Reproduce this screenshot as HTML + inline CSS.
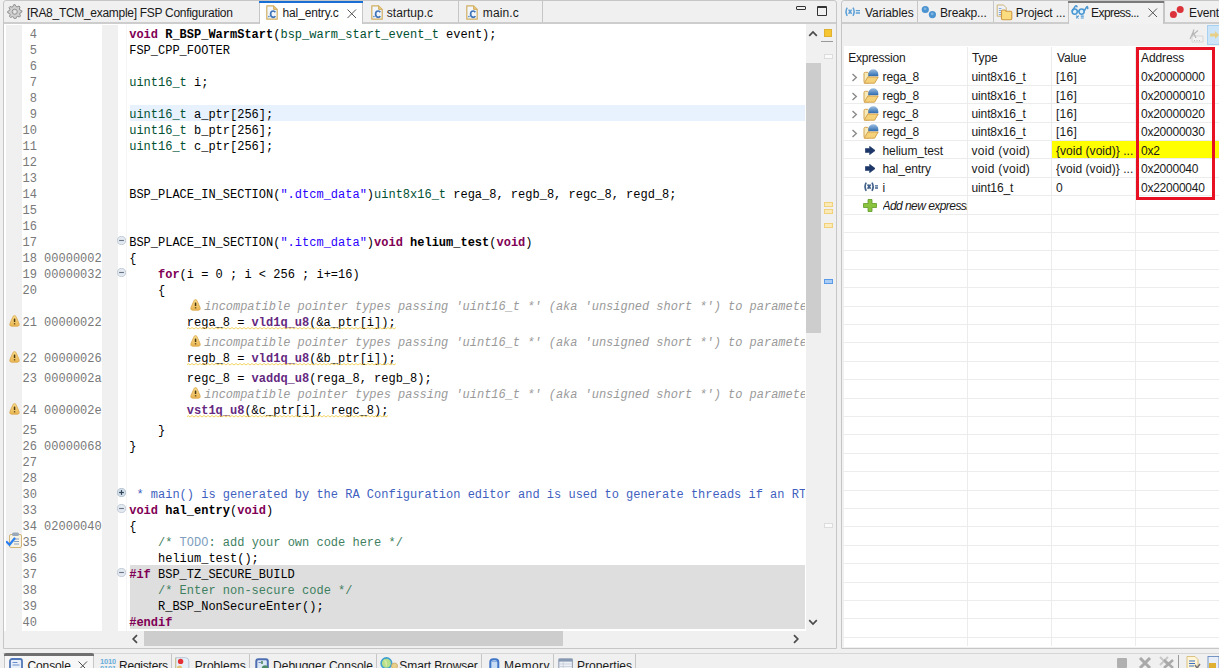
<!DOCTYPE html>
<html><head><meta charset="utf-8"><style>
*{box-sizing:border-box}
body{margin:0;width:1219px;height:668px;overflow:hidden;background:#f0f0f0;position:relative;font-family:'Liberation Sans', sans-serif;font-size:12px;letter-spacing:-0.3px;color:#000}
.a{position:absolute}
.code{position:absolute;left:0;white-space:pre;font-family:'Liberation Mono', monospace;font-size:12px;line-height:16px;letter-spacing:0}
.ln{position:absolute;white-space:pre;font-family:'Liberation Mono', monospace;font-size:12px;line-height:16px;color:#787878;left:22.5px;letter-spacing:0}
.t{position:absolute;white-space:pre;line-height:14px;color:#1a1a1a}
</style></head><body>

<div class="a" style="left:3px;top:0;width:834px;height:649px;border:1px solid #c6c6c6;border-radius:3px 3px 0 0;background:#f0f0f0"></div>
<div class="a" style="left:4px;top:22px;width:832px;height:2px;background:#cdcdcd"></div>
<svg class="a" style="left:7px;top:3.9px" width="15.5" height="15.5" viewBox="0 0 15.5 15.5"><polygon points="6.71,0.73 8.10,0.66 9.06,2.51 10.06,2.87 11.98,2.05 13.01,2.98 12.38,4.97 12.83,5.93 14.77,6.71 14.84,8.10 12.99,9.06 12.63,10.06 13.45,11.98 12.52,13.01 10.53,12.38 9.57,12.83 8.79,14.77 7.40,14.84 6.44,12.99 5.44,12.63 3.52,13.45 2.49,12.52 3.12,10.53 2.67,9.57 0.73,8.79 0.66,7.40 2.51,6.44 2.87,5.44 2.05,3.52 2.98,2.49 4.97,3.12 5.93,2.67" fill="#cfcfcf" stroke="#8e8e8e" stroke-width="1" stroke-linejoin="round"/><circle cx="7.75" cy="7.75" r="2.6" fill="#d8d8d8" stroke="#8e8e8e" stroke-width="0.9"/><circle cx="7.75" cy="7.75" r="1" fill="#f0f0f0"/></svg>
<div class="t" style="left:27px;top:6px;letter-spacing:-0.294px">[RA8_TCM_example] FSP Configuration</div>
<div class="a" style="left:259px;top:1px;width:104px;height:23px;background:#fff;border-left:1px solid #c6c6c6;border-right:1px solid #c6c6c6"></div>
<div class="a" style="left:259px;top:1px;width:104px;height:2px;background:#1a6fd6"></div>
<svg class="a" style="left:265.7px;top:4.6px" width="12" height="15" viewBox="0 0 12 15"><path d="M0.8 0.8 H7.6 L11.2 4.4 V14.2 H0.8 Z" fill="#f2f6fb" stroke="#d2ae62" stroke-width="1.2" stroke-linejoin="round"/><path d="M7.6 0.8 V4.4 H11.2" fill="#e8c77a" stroke="#d2ae62" stroke-width="1"/><circle cx="2.9" cy="11.6" r="0.8" fill="#4a7fc0"/><path d="M9.3 7.2 Q8.6 6 7.2 6 Q4.6 6 4.6 9.1 Q4.6 12.3 7.2 12.3 Q8.6 12.3 9.3 11.1" fill="none" stroke="#3f74b8" stroke-width="1.7"/></svg>
<div class="t" style="left:282.6px;top:6px;letter-spacing:-0.16px">hal_entry.c</div>
<svg class="a" style="left:347px;top:8.5px" width="9.5" height="9.5" viewBox="0 0 9.5 9.5"><path d="M0.5 0.5 L9.0 9.0 M9.0 0.5 L0.5 9.0" stroke="#555" stroke-width="1"/></svg>
<svg class="a" style="left:370.5px;top:4.6px" width="12" height="15" viewBox="0 0 12 15"><path d="M0.8 0.8 H7.6 L11.2 4.4 V14.2 H0.8 Z" fill="#f2f6fb" stroke="#d2ae62" stroke-width="1.2" stroke-linejoin="round"/><path d="M7.6 0.8 V4.4 H11.2" fill="#e8c77a" stroke="#d2ae62" stroke-width="1"/><circle cx="2.9" cy="11.6" r="0.8" fill="#4a7fc0"/><path d="M9.3 7.2 Q8.6 6 7.2 6 Q4.6 6 4.6 9.1 Q4.6 12.3 7.2 12.3 Q8.6 12.3 9.3 11.1" fill="none" stroke="#3f74b8" stroke-width="1.7"/></svg>
<div class="t" style="left:386.8px;top:6px;letter-spacing:0.025px">startup.c</div>
<div class="a" style="left:458px;top:1px;width:1px;height:21px;background:#c6c6c6"></div>
<svg class="a" style="left:465.5px;top:4.6px" width="12" height="15" viewBox="0 0 12 15"><path d="M0.8 0.8 H7.6 L11.2 4.4 V14.2 H0.8 Z" fill="#f2f6fb" stroke="#d2ae62" stroke-width="1.2" stroke-linejoin="round"/><path d="M7.6 0.8 V4.4 H11.2" fill="#e8c77a" stroke="#d2ae62" stroke-width="1"/><circle cx="2.9" cy="11.6" r="0.8" fill="#4a7fc0"/><path d="M9.3 7.2 Q8.6 6 7.2 6 Q4.6 6 4.6 9.1 Q4.6 12.3 7.2 12.3 Q8.6 12.3 9.3 11.1" fill="none" stroke="#3f74b8" stroke-width="1.7"/></svg>
<div class="t" style="left:482.8px;top:6px;letter-spacing:0.12px">main.c</div>
<div class="a" style="left:542px;top:1px;width:1px;height:21px;background:#c6c6c6"></div>
<div class="a" style="left:796px;top:6px;width:10px;height:4px;border:1px solid #333;border-radius:1px"></div>
<div class="a" style="left:817px;top:6px;width:10px;height:10px;border:1px solid #333;border-top-width:2px;border-radius:1px"></div>
<div class="a" style="left:4px;top:24px;width:832px;height:607px;background:#fff"></div>
<div class="a" style="left:6px;top:25px;width:16px;height:606px;background:#f0f0f0"></div>
<div class="a" style="left:102px;top:25px;width:16px;height:606px;background:#f0f0f0"></div>
<div class="a" style="left:126px;top:25px;width:1px;height:606px;background:#f5f5f5"></div>
<div class="a" style="left:127px;top:24px;width:678px;height:605px;overflow:hidden"><div class="code" style="top:3px;left:2.1999999999999886px"><span style="color:#7f0055;font-weight:bold">void</span><span style="color:#000"> </span><span style="color:#000;font-weight:bold">R_BSP_WarmStart</span><span style="color:#000">(</span><span style="color:#005032">bsp_warm_start_event_t</span><span style="color:#000"> event);</span></div><div class="code" style="top:19px;left:2.1999999999999886px"><span style="color:#000">FSP_CPP_FOOTER</span></div><div class="code" style="top:51px;left:2.1999999999999886px"><span style="color:#005032">uint16_t</span><span style="color:#000"> i;</span></div><div class="a" style="left:2.5px;top:81px;width:700px;height:16px;background:#e8f2fe"></div><div class="code" style="top:83px;left:2.1999999999999886px"><span style="color:#005032">uint16_t</span><span style="color:#000"> a_ptr[256];</span></div><div class="code" style="top:99px;left:2.1999999999999886px"><span style="color:#005032">uint16_t</span><span style="color:#000"> b_ptr[256];</span></div><div class="code" style="top:115px;left:2.1999999999999886px"><span style="color:#005032">uint16_t</span><span style="color:#000"> c_ptr[256];</span></div><div class="code" style="top:163px;left:2.1999999999999886px"><span style="color:#000">BSP_PLACE_IN_SECTION(</span><span style="color:#2a00ff">&quot;.dtcm_data&quot;</span><span style="color:#000">)</span><span style="color:#005032">uint8x16_t</span><span style="color:#000"> rega_8, regb_8, regc_8, regd_8;</span></div><div class="code" style="top:211px;left:2.1999999999999886px"><span style="color:#000">BSP_PLACE_IN_SECTION(</span><span style="color:#2a00ff">&quot;.itcm_data&quot;</span><span style="color:#000">)</span><span style="color:#7f0055;font-weight:bold">void</span><span style="color:#000"> </span><span style="color:#000;font-weight:bold">helium_test</span><span style="color:#000">(</span><span style="color:#7f0055;font-weight:bold">void</span><span style="color:#000">)</span></div><div class="code" style="top:227px;left:2.1999999999999886px"><span style="color:#000">{</span></div><div class="code" style="top:243px;left:2.1999999999999886px"><span style="color:#000">    </span><span style="color:#7f0055;font-weight:bold">for</span><span style="color:#000">(i = 0 ; i &lt; 256 ; i+=16)</span></div><div class="code" style="top:259px;left:2.1999999999999886px"><span style="color:#000">    {</span></div><div class="code" style="top:275px;left:77.29999999999998px;color:#9a9a9a;font-style:italic;letter-spacing:-0.026px">incompatible pointer types passing 'uint16_t *' (aka 'unsigned short *') to parameter of type 'uint8_t *'</div><svg class="a" style="left:62.79999999999998px;top:274.8px" width="11" height="12" viewBox="0 0 11 12"><defs><linearGradient id="wg" x1="0" y1="0" x2="0" y2="1"><stop offset="0" stop-color="#f9dc8c"/><stop offset="1" stop-color="#eab552"/></linearGradient></defs><path d="M5.5 0.6 C4.6 0.6 4.1 1.3 3.7 2.3 L1 8.4 C0.4 9.9 1.1 11.2 2.5 11.2 H8.5 C9.9 11.2 10.6 9.9 10 8.4 L7.3 2.3 C6.9 1.3 6.4 0.6 5.5 0.6 Z" fill="url(#wg)" stroke="#d9a548" stroke-width="0.8"/><rect x="4.8" y="3.4" width="1.5" height="3.6" rx="0.5" fill="#4a3810"/><rect x="4.8" y="7.9" width="1.5" height="1.5" rx="0.5" fill="#6a5520"/></svg><div class="code" style="top:291px;left:2.1999999999999886px"><span style="color:#000">        rega_8 = </span><span style="color:#642880;font-weight:bold">vld1q_u8</span><span style="color:#000">(&amp;a_ptr[i]);</span></div><svg class="a" style="left:59.79999999999999px;top:302.5px" width="208.8" height="3"><path d="M0 2 L1 0.5 L3 2 L5 0.5 L7 2 L9 0.5 L11 2 L13 0.5 L15 2 L17 0.5 L19 2 L21 0.5 L23 2 L25 0.5 L27 2 L29 0.5 L31 2 L33 0.5 L35 2 L37 0.5 L39 2 L41 0.5 L43 2 L45 0.5 L47 2 L49 0.5 L51 2 L53 0.5 L55 2 L57 0.5 L59 2 L61 0.5 L63 2 L65 0.5 L67 2 L69 0.5 L71 2 L73 0.5 L75 2 L77 0.5 L79 2 L81 0.5 L83 2 L85 0.5 L87 2 L89 0.5 L91 2 L93 0.5 L95 2 L97 0.5 L99 2 L101 0.5 L103 2 L105 0.5 L107 2 L109 0.5 L111 2 L113 0.5 L115 2 L117 0.5 L119 2 L121 0.5 L123 2 L125 0.5 L127 2 L129 0.5 L131 2 L133 0.5 L135 2 L137 0.5 L139 2 L141 0.5 L143 2 L145 0.5 L147 2 L149 0.5 L151 2 L153 0.5 L155 2 L157 0.5 L159 2 L161 0.5 L163 2 L165 0.5 L167 2 L169 0.5 L171 2 L173 0.5 L175 2 L177 0.5 L179 2 L181 0.5 L183 2 L185 0.5 L187 2 L189 0.5 L191 2 L193 0.5 L195 2 L197 0.5 L199 2 L201 0.5 L203 2 L205 0.5 L207 2 L209 0.5" stroke="#f2cf55" stroke-width="0.9" fill="none"/></svg><div class="code" style="top:311px;left:77.29999999999998px;color:#9a9a9a;font-style:italic;letter-spacing:-0.026px">incompatible pointer types passing 'uint16_t *' (aka 'unsigned short *') to parameter of type 'uint8_t *'</div><svg class="a" style="left:62.79999999999998px;top:310.8px" width="11" height="12" viewBox="0 0 11 12"><defs><linearGradient id="wg" x1="0" y1="0" x2="0" y2="1"><stop offset="0" stop-color="#f9dc8c"/><stop offset="1" stop-color="#eab552"/></linearGradient></defs><path d="M5.5 0.6 C4.6 0.6 4.1 1.3 3.7 2.3 L1 8.4 C0.4 9.9 1.1 11.2 2.5 11.2 H8.5 C9.9 11.2 10.6 9.9 10 8.4 L7.3 2.3 C6.9 1.3 6.4 0.6 5.5 0.6 Z" fill="url(#wg)" stroke="#d9a548" stroke-width="0.8"/><rect x="4.8" y="3.4" width="1.5" height="3.6" rx="0.5" fill="#4a3810"/><rect x="4.8" y="7.9" width="1.5" height="1.5" rx="0.5" fill="#6a5520"/></svg><div class="code" style="top:327px;left:2.1999999999999886px"><span style="color:#000">        regb_8 = </span><span style="color:#642880;font-weight:bold">vld1q_u8</span><span style="color:#000">(&amp;b_ptr[i]);</span></div><svg class="a" style="left:59.79999999999999px;top:338.5px" width="208.8" height="3"><path d="M0 2 L1 0.5 L3 2 L5 0.5 L7 2 L9 0.5 L11 2 L13 0.5 L15 2 L17 0.5 L19 2 L21 0.5 L23 2 L25 0.5 L27 2 L29 0.5 L31 2 L33 0.5 L35 2 L37 0.5 L39 2 L41 0.5 L43 2 L45 0.5 L47 2 L49 0.5 L51 2 L53 0.5 L55 2 L57 0.5 L59 2 L61 0.5 L63 2 L65 0.5 L67 2 L69 0.5 L71 2 L73 0.5 L75 2 L77 0.5 L79 2 L81 0.5 L83 2 L85 0.5 L87 2 L89 0.5 L91 2 L93 0.5 L95 2 L97 0.5 L99 2 L101 0.5 L103 2 L105 0.5 L107 2 L109 0.5 L111 2 L113 0.5 L115 2 L117 0.5 L119 2 L121 0.5 L123 2 L125 0.5 L127 2 L129 0.5 L131 2 L133 0.5 L135 2 L137 0.5 L139 2 L141 0.5 L143 2 L145 0.5 L147 2 L149 0.5 L151 2 L153 0.5 L155 2 L157 0.5 L159 2 L161 0.5 L163 2 L165 0.5 L167 2 L169 0.5 L171 2 L173 0.5 L175 2 L177 0.5 L179 2 L181 0.5 L183 2 L185 0.5 L187 2 L189 0.5 L191 2 L193 0.5 L195 2 L197 0.5 L199 2 L201 0.5 L203 2 L205 0.5 L207 2 L209 0.5" stroke="#f2cf55" stroke-width="0.9" fill="none"/></svg><div class="code" style="top:347px;left:2.1999999999999886px"><span style="color:#000">        regc_8 = </span><span style="color:#642880;font-weight:bold">vaddq_u8</span><span style="color:#000">(rega_8, regb_8);</span></div><div class="code" style="top:363px;left:77.29999999999998px;color:#9a9a9a;font-style:italic;letter-spacing:-0.026px">incompatible pointer types passing 'uint16_t *' (aka 'unsigned short *') to parameter of type 'uint8_t *'</div><svg class="a" style="left:62.79999999999998px;top:362.8px" width="11" height="12" viewBox="0 0 11 12"><defs><linearGradient id="wg" x1="0" y1="0" x2="0" y2="1"><stop offset="0" stop-color="#f9dc8c"/><stop offset="1" stop-color="#eab552"/></linearGradient></defs><path d="M5.5 0.6 C4.6 0.6 4.1 1.3 3.7 2.3 L1 8.4 C0.4 9.9 1.1 11.2 2.5 11.2 H8.5 C9.9 11.2 10.6 9.9 10 8.4 L7.3 2.3 C6.9 1.3 6.4 0.6 5.5 0.6 Z" fill="url(#wg)" stroke="#d9a548" stroke-width="0.8"/><rect x="4.8" y="3.4" width="1.5" height="3.6" rx="0.5" fill="#4a3810"/><rect x="4.8" y="7.9" width="1.5" height="1.5" rx="0.5" fill="#6a5520"/></svg><div class="code" style="top:379px;left:2.1999999999999886px"><span style="color:#000">        </span><span style="color:#642880;font-weight:bold">vst1q_u8</span><span style="color:#000">(&amp;c_ptr[i], regc_8);</span></div><svg class="a" style="left:59.79999999999999px;top:390.5px" width="201.6" height="3"><path d="M0 2 L1 0.5 L3 2 L5 0.5 L7 2 L9 0.5 L11 2 L13 0.5 L15 2 L17 0.5 L19 2 L21 0.5 L23 2 L25 0.5 L27 2 L29 0.5 L31 2 L33 0.5 L35 2 L37 0.5 L39 2 L41 0.5 L43 2 L45 0.5 L47 2 L49 0.5 L51 2 L53 0.5 L55 2 L57 0.5 L59 2 L61 0.5 L63 2 L65 0.5 L67 2 L69 0.5 L71 2 L73 0.5 L75 2 L77 0.5 L79 2 L81 0.5 L83 2 L85 0.5 L87 2 L89 0.5 L91 2 L93 0.5 L95 2 L97 0.5 L99 2 L101 0.5 L103 2 L105 0.5 L107 2 L109 0.5 L111 2 L113 0.5 L115 2 L117 0.5 L119 2 L121 0.5 L123 2 L125 0.5 L127 2 L129 0.5 L131 2 L133 0.5 L135 2 L137 0.5 L139 2 L141 0.5 L143 2 L145 0.5 L147 2 L149 0.5 L151 2 L153 0.5 L155 2 L157 0.5 L159 2 L161 0.5 L163 2 L165 0.5 L167 2 L169 0.5 L171 2 L173 0.5 L175 2 L177 0.5 L179 2 L181 0.5 L183 2 L185 0.5 L187 2 L189 0.5 L191 2 L193 0.5 L195 2 L197 0.5 L199 2 L201 0.5" stroke="#f2cf55" stroke-width="0.9" fill="none"/></svg><div class="code" style="top:399px;left:2.1999999999999886px"><span style="color:#000">    }</span></div><div class="code" style="top:415px;left:2.1999999999999886px"><span style="color:#000">}</span></div><div class="code" style="top:463px;left:2.1999999999999886px"><span style="color:#3f5fbf"> * main() is generated by the RA Configuration editor and is used to generate threads if an RTOS is used.</span></div><div class="code" style="top:479px;left:2.1999999999999886px"><span style="color:#7f0055;font-weight:bold">void</span><span style="color:#000"> </span><span style="color:#000;font-weight:bold">hal_entry</span><span style="color:#000">(</span><span style="color:#7f0055;font-weight:bold">void</span><span style="color:#000">)</span></div><div class="code" style="top:495px;left:2.1999999999999886px"><span style="color:#000">{</span></div><div class="code" style="top:511px;left:2.1999999999999886px"><span style="color:#000">    </span><span style="color:#3f7f5f">/* </span><span style="color:#7f9fbf">TODO</span><span style="color:#3f7f5f">: add your own code here */</span></div><div class="code" style="top:527px;left:2.1999999999999886px"><span style="color:#000">    helium_test();</span></div><div class="a" style="left:2.5px;top:541px;width:700px;height:16px;background:#dedede"></div><div class="code" style="top:543px;left:2.1999999999999886px"><span style="color:#7f0055;font-weight:bold">#if</span><span style="color:#000"> BSP_TZ_SECURE_BUILD</span></div><div class="a" style="left:2.5px;top:557px;width:700px;height:16px;background:#dedede"></div><div class="code" style="top:559px;left:2.1999999999999886px"><span style="color:#000">    </span><span style="color:#3f7f5f">/* Enter non-secure code */</span></div><div class="a" style="left:2.5px;top:573px;width:700px;height:16px;background:#dedede"></div><div class="code" style="top:575px;left:2.1999999999999886px"><span style="color:#000">    R_BSP_NonSecureEnter();</span></div><div class="a" style="left:2.5px;top:589px;width:700px;height:16px;background:#dedede"></div><div class="code" style="top:591px;left:2.1999999999999886px"><span style="color:#7f0055;font-weight:bold">#endif</span></div></div>
<div class="ln" style="top:27px"> 4 </div><div class="ln" style="top:43px"> 5 </div><div class="ln" style="top:59px"> 6 </div><div class="ln" style="top:75px"> 7 </div><div class="ln" style="top:91px"> 8 </div><div class="ln" style="top:107px"> 9 </div><div class="ln" style="top:123px">10 </div><div class="ln" style="top:139px">11 </div><div class="ln" style="top:155px">12 </div><div class="ln" style="top:171px">13 </div><div class="ln" style="top:187px">14 </div><div class="ln" style="top:203px">15 </div><div class="ln" style="top:219px">16 </div><div class="ln" style="top:235px">17 </div><svg class="a" style="left:117.3px;top:236px" width="9" height="9" viewBox="0 0 9 9"><circle cx="4.5" cy="4.5" r="4.1" fill="#e4e9f0" stroke="#bcc8d6" stroke-width="0.9"/><rect x="2.1" y="3.95" width="4.8" height="1.1" fill="#667486"/></svg><div class="ln" style="top:251px">18 00000002</div><div class="ln" style="top:267px">19 00000032</div><svg class="a" style="left:117.3px;top:268px" width="9" height="9" viewBox="0 0 9 9"><circle cx="4.5" cy="4.5" r="4.1" fill="#e4e9f0" stroke="#bcc8d6" stroke-width="0.9"/><rect x="2.1" y="3.95" width="4.8" height="1.1" fill="#667486"/></svg><div class="ln" style="top:283px">20 </div><div class="ln" style="top:315px">21 00000022</div><svg class="a" style="left:8.8px;top:314.8px" width="11" height="12" viewBox="0 0 11 12"><defs><linearGradient id="wg" x1="0" y1="0" x2="0" y2="1"><stop offset="0" stop-color="#f9dc8c"/><stop offset="1" stop-color="#eab552"/></linearGradient></defs><path d="M5.5 0.6 C4.6 0.6 4.1 1.3 3.7 2.3 L1 8.4 C0.4 9.9 1.1 11.2 2.5 11.2 H8.5 C9.9 11.2 10.6 9.9 10 8.4 L7.3 2.3 C6.9 1.3 6.4 0.6 5.5 0.6 Z" fill="url(#wg)" stroke="#d9a548" stroke-width="0.8"/><rect x="4.8" y="3.4" width="1.5" height="3.6" rx="0.5" fill="#4a3810"/><rect x="4.8" y="7.9" width="1.5" height="1.5" rx="0.5" fill="#6a5520"/></svg><div class="ln" style="top:351px">22 00000026</div><svg class="a" style="left:8.8px;top:350.8px" width="11" height="12" viewBox="0 0 11 12"><defs><linearGradient id="wg" x1="0" y1="0" x2="0" y2="1"><stop offset="0" stop-color="#f9dc8c"/><stop offset="1" stop-color="#eab552"/></linearGradient></defs><path d="M5.5 0.6 C4.6 0.6 4.1 1.3 3.7 2.3 L1 8.4 C0.4 9.9 1.1 11.2 2.5 11.2 H8.5 C9.9 11.2 10.6 9.9 10 8.4 L7.3 2.3 C6.9 1.3 6.4 0.6 5.5 0.6 Z" fill="url(#wg)" stroke="#d9a548" stroke-width="0.8"/><rect x="4.8" y="3.4" width="1.5" height="3.6" rx="0.5" fill="#4a3810"/><rect x="4.8" y="7.9" width="1.5" height="1.5" rx="0.5" fill="#6a5520"/></svg><div class="ln" style="top:371px">23 0000002a</div><div class="ln" style="top:403px">24 0000002e</div><svg class="a" style="left:8.8px;top:402.8px" width="11" height="12" viewBox="0 0 11 12"><defs><linearGradient id="wg" x1="0" y1="0" x2="0" y2="1"><stop offset="0" stop-color="#f9dc8c"/><stop offset="1" stop-color="#eab552"/></linearGradient></defs><path d="M5.5 0.6 C4.6 0.6 4.1 1.3 3.7 2.3 L1 8.4 C0.4 9.9 1.1 11.2 2.5 11.2 H8.5 C9.9 11.2 10.6 9.9 10 8.4 L7.3 2.3 C6.9 1.3 6.4 0.6 5.5 0.6 Z" fill="url(#wg)" stroke="#d9a548" stroke-width="0.8"/><rect x="4.8" y="3.4" width="1.5" height="3.6" rx="0.5" fill="#4a3810"/><rect x="4.8" y="7.9" width="1.5" height="1.5" rx="0.5" fill="#6a5520"/></svg><div class="ln" style="top:423px">25 </div><div class="ln" style="top:439px">26 00000068</div><div class="ln" style="top:455px">27 </div><div class="ln" style="top:471px">28 </div><div class="ln" style="top:487px">30 </div><svg class="a" style="left:117.3px;top:488px" width="9" height="9" viewBox="0 0 9 9"><circle cx="4.5" cy="4.5" r="4.1" fill="#d3dfea" stroke="#aebdcc" stroke-width="0.9"/><rect x="2.1" y="3.9" width="4.8" height="1.2" fill="#34465a"/><rect x="3.9" y="2.1" width="1.2" height="4.8" fill="#34465a"/></svg><div class="ln" style="top:503px">33 </div><svg class="a" style="left:117.3px;top:504px" width="9" height="9" viewBox="0 0 9 9"><circle cx="4.5" cy="4.5" r="4.1" fill="#e4e9f0" stroke="#bcc8d6" stroke-width="0.9"/><rect x="2.1" y="3.95" width="4.8" height="1.1" fill="#667486"/></svg><div class="ln" style="top:519px">34 02000040</div><div class="ln" style="top:535px">35 </div><svg class="a" style="left:6px;top:532px" width="16" height="16" viewBox="0 0 16 16"><rect x="3.5" y="2.5" width="12" height="13" rx="1.5" fill="#f6f2e4" stroke="#d2b478" stroke-width="1"/><rect x="6" y="0.5" width="7" height="3.5" rx="1.5" fill="#9aa7b8"/><path d="M8 7 H13 M8 9.5 H13 M8 12 H13" stroke="#7d95c0" stroke-width="0.9"/><path d="M0.8 10 L3.5 12.8 L8.5 6.5" stroke="#2a7ff0" stroke-width="2.2" fill="none" stroke-linecap="round"/></svg><div class="ln" style="top:551px">36 </div><div class="ln" style="top:567px">37 </div><svg class="a" style="left:117.3px;top:568px" width="9" height="9" viewBox="0 0 9 9"><circle cx="4.5" cy="4.5" r="4.1" fill="#e4e9f0" stroke="#bcc8d6" stroke-width="0.9"/><rect x="2.1" y="3.95" width="4.8" height="1.1" fill="#667486"/></svg><div class="ln" style="top:583px">38 </div><div class="ln" style="top:599px">39 </div><div class="ln" style="top:615px">40 </div>
<div class="a" style="left:806px;top:24px;width:15px;height:607px;background:#f0f0f0"></div>
<div class="a" style="left:806px;top:63px;width:15px;height:270px;background:#cdcdcd"></div>
<svg class="a" style="left:808px;top:29.5px" width="10" height="7"><path d="M1.2 5.8 L5 2 L8.8 5.8" stroke="#4a4a4a" stroke-width="1.7" fill="none"/></svg>
<svg class="a" style="left:808px;top:619px" width="10" height="7"><path d="M1.2 1.2 L5 5 L8.8 1.2" stroke="#4a4a4a" stroke-width="1.7" fill="none"/></svg>
<div class="a" style="left:821px;top:24px;width:15px;height:607px;background:#f0f0f0"></div>
<div class="a" style="left:824px;top:29px;width:8px;height:8px;background:#f5c631;border:1px solid #e0b030"></div>
<div class="a" style="left:821px;top:41px;width:12px;height:1px;background:#9a9a9a"></div>
<div class="a" style="left:824px;top:54px;width:9px;height:5px;border:1px solid #dcdcdc;background:#fafafa"></div>
<div class="a" style="left:824px;top:202px;width:9px;height:5px;border:1px solid #f1d27a;background:#fbeab5"></div>
<div class="a" style="left:824px;top:209px;width:9px;height:5px;border:1px solid #f1d27a;background:#fbeab5"></div>
<div class="a" style="left:824px;top:223px;width:9px;height:5px;border:1px solid #f1d27a;background:#fbeab5"></div>
<div class="a" style="left:824px;top:279px;width:9px;height:5px;border:1px solid #5a9ae6;background:#a9cdf5"></div>
<div class="a" style="left:824px;top:523px;width:9px;height:5px;border:1px solid #dcdcdc;background:#fafafa"></div>
<div class="a" style="left:4px;top:631px;width:832px;height:17px;background:#f0f0f0"></div>
<div class="a" style="left:144px;top:631.2px;width:419px;height:14.7px;background:#cdcdcd"></div>
<svg class="a" style="left:131px;top:634px" width="8" height="10"><path d="M6 1.2 L2.2 5 L6 8.8" stroke="#4a4a4a" stroke-width="1.7" fill="none"/></svg>
<svg class="a" style="left:792px;top:634px" width="8" height="10"><path d="M2 1.2 L5.8 5 L2 8.8" stroke="#4a4a4a" stroke-width="1.7" fill="none"/></svg>
<div class="a" style="left:841px;top:0;width:380px;height:649px;border:1px solid #c6c6c6;border-radius:3px 3px 0 0;background:#f0f0f0"></div>
<div class="a" style="left:842px;top:22px;width:378px;height:2px;background:#cdcdcd"></div>
<svg class="a" style="left:843.7px;top:7px" width="17" height="10" viewBox="0 0 17 10"><g fill="none" stroke="#5b9fd6" stroke-width="1.5"><path d="M3.2 0.6 Q0.9 4.5 3.2 8.8"/><path d="M9 0.6 Q11.3 4.5 9 8.8"/><path d="M4.6 2.6 L7.6 6.8 M7.6 2.6 L4.6 6.8"/><path d="M11.8 3.6 H16 M11.8 6 H16" stroke-width="1.3"/></g></svg>
<div class="t" style="left:865px;top:6px;letter-spacing:-0.05px">Variables</div>
<div class="a" style="left:917px;top:1px;width:1px;height:21px;background:#c6c6c6"></div>
<svg class="a" style="left:921px;top:5px" width="16" height="15" viewBox="0 0 16 15"><circle cx="4.3" cy="4.5" r="3.6" fill="#4b93d0"/><circle cx="11.4" cy="9.6" r="3.6" fill="#4b93d0"/><circle cx="4.1" cy="3.8" r="1.4" fill="#7db5e2"/><circle cx="11.2" cy="8.9" r="1.4" fill="#7db5e2"/></svg>
<div class="t" style="left:940px;top:6px;letter-spacing:-0.15px">Breakp...</div>
<div class="a" style="left:993px;top:1px;width:1px;height:21px;background:#c6c6c6"></div>
<svg class="a" style="left:996px;top:3.5px" width="17" height="17" viewBox="0 0 17 17"><path d="M1.2 1 H7.5 L10.2 3.7 V12.2 H1.2 Z" fill="#eef3fa" stroke="#cdb478" stroke-width="1"/><path d="M2.8 4.5 H5.5 M2.8 6.5 H6 M2.8 8.5 H5 M2.8 10.5 H5" stroke="#7fa2d8" stroke-width="0.9"/><path d="M5.5 7.2 Q5.5 6 6.7 6 H8.8 L10 7.3 H14.6 Q15.8 7.3 15.8 8.5 V14.6 Q15.8 15.8 14.6 15.8 H6.7 Q5.5 15.8 5.5 14.6 Z" fill="#fbdc7e" stroke="#d09a45" stroke-width="1.1"/></svg>
<div class="t" style="left:1015.8px;top:6px;letter-spacing:-0.08px">Project ...</div>
<div class="a" style="left:1068px;top:1px;width:96px;height:23px;background:#f2f2f2;border-left:1px solid #c6c6c6;border-right:1px solid #c6c6c6"></div>
<div class="a" style="left:1068px;top:1px;width:96px;height:2px;background:#7a7a7a"></div>
<svg class="a" style="left:1071px;top:4px" width="18" height="15" viewBox="0 0 18 15"><g stroke="#4a97d2" fill="none" stroke-width="1.5"><circle cx="3.7" cy="7.6" r="2.6" fill="#dff0fb"/><circle cx="10.6" cy="7.6" r="2.6" fill="#dff0fb"/><path d="M6.3 7.2 H8"/><path d="M1.2 7 L4.3 2.2 Q5.3 1 6 2.8" stroke-linecap="round"/><path d="M13.1 7 L15.8 2.8 Q16.6 2 16.8 4.6" stroke-linecap="round"/></g><path d="M5.3 11.6 L7.7 14.4 M7.7 11.6 L5.3 14.4" stroke="#4a97d2" stroke-width="1.2"/><path d="M9.8 12.2 H12.8 M9.8 14 H12.8" stroke="#4a97d2" stroke-width="1.2"/></svg>
<div class="t" style="left:1091px;top:6px;letter-spacing:-0.556px">Express...</div>
<svg class="a" style="left:1148px;top:8px" width="9.5" height="9.5" viewBox="0 0 9.5 9.5"><path d="M0.5 0.5 L9.0 9.0 M9.0 0.5 L0.5 9.0" stroke="#555" stroke-width="1"/></svg>
<svg class="a" style="left:1169px;top:5px" width="16" height="14" viewBox="0 0 16 14"><circle cx="4.4" cy="9.6" r="3.5" fill="#dc333b"/><circle cx="11.2" cy="4.4" r="3.5" fill="#dc333b"/></svg>
<div class="t" style="left:1189px;top:6px;letter-spacing:-0.12px">Eventpoints</div>
<div class="a" style="left:1164px;top:1px;width:1px;height:22px;background:#c6c6c6"></div>
<svg class="a" style="left:1188px;top:29px" width="16" height="14" viewBox="0 0 16 14"><path d="M4 12 V7 H15 V13 H4 Z" fill="#f2f2f2" stroke="#cfcfcf" stroke-width="0.8"/><path d="M2 10 Q5 4 6 0.5 M3.5 7 L10 1.5 M5 3 L8 9" stroke="#b8b8b8" stroke-width="1.2" fill="none"/><path d="M6 11.5 H7 M8.5 11.5 H9.5 M11 11.5 H12" stroke="#c0c0c0" stroke-width="1"/></svg>
<div class="a" style="left:1207px;top:25px;width:16px;height:20px;background:#cce4f7;border:1px solid #a8d0f0"></div>
<svg class="a" style="left:1210px;top:30px" width="9" height="10" viewBox="0 0 9 10"><path d="M0 3.5 H5 V1 L9 5 L5 9 V6.5 H0 Z" fill="#e8cf88"/></svg>
<div class="a" style="left:844px;top:46px;width:376px;height:601px;background:#fff"></div>
<div class="a" style="left:844px;top:84.80px;width:376px;height:1px;background:#ececec"></div>
<div class="a" style="left:844px;top:103.20px;width:376px;height:1px;background:#ececec"></div>
<div class="a" style="left:844px;top:121.60px;width:376px;height:1px;background:#ececec"></div>
<div class="a" style="left:844px;top:140.00px;width:376px;height:1px;background:#ececec"></div>
<div class="a" style="left:844px;top:158.40px;width:376px;height:1px;background:#ececec"></div>
<div class="a" style="left:844px;top:176.80px;width:376px;height:1px;background:#ececec"></div>
<div class="a" style="left:844px;top:195.20px;width:376px;height:1px;background:#ececec"></div>
<div class="a" style="left:844px;top:213.60px;width:376px;height:1px;background:#ececec"></div>
<div class="a" style="left:844px;top:232.00px;width:376px;height:1px;background:#ececec"></div>
<div class="a" style="left:844px;top:250.40px;width:376px;height:1px;background:#ececec"></div>
<div class="a" style="left:844px;top:268.80px;width:376px;height:1px;background:#ececec"></div>
<div class="a" style="left:844px;top:287.20px;width:376px;height:1px;background:#ececec"></div>
<div class="a" style="left:844px;top:305.60px;width:376px;height:1px;background:#ececec"></div>
<div class="a" style="left:844px;top:324.00px;width:376px;height:1px;background:#ececec"></div>
<div class="a" style="left:844px;top:342.40px;width:376px;height:1px;background:#ececec"></div>
<div class="a" style="left:844px;top:360.80px;width:376px;height:1px;background:#ececec"></div>
<div class="a" style="left:844px;top:379.20px;width:376px;height:1px;background:#ececec"></div>
<div class="a" style="left:844px;top:397.60px;width:376px;height:1px;background:#ececec"></div>
<div class="a" style="left:844px;top:416.00px;width:376px;height:1px;background:#ececec"></div>
<div class="a" style="left:844px;top:434.40px;width:376px;height:1px;background:#ececec"></div>
<div class="a" style="left:844px;top:452.80px;width:376px;height:1px;background:#ececec"></div>
<div class="a" style="left:844px;top:471.20px;width:376px;height:1px;background:#ececec"></div>
<div class="a" style="left:844px;top:489.60px;width:376px;height:1px;background:#ececec"></div>
<div class="a" style="left:844px;top:508.00px;width:376px;height:1px;background:#ececec"></div>
<div class="a" style="left:844px;top:526.40px;width:376px;height:1px;background:#ececec"></div>
<div class="a" style="left:844px;top:544.80px;width:376px;height:1px;background:#ececec"></div>
<div class="a" style="left:844px;top:563.20px;width:376px;height:1px;background:#ececec"></div>
<div class="a" style="left:844px;top:581.60px;width:376px;height:1px;background:#ececec"></div>
<div class="a" style="left:844px;top:600.00px;width:376px;height:1px;background:#ececec"></div>
<div class="a" style="left:844px;top:618.40px;width:376px;height:1px;background:#ececec"></div>
<div class="a" style="left:844px;top:636.80px;width:376px;height:1px;background:#ececec"></div>
<div class="a" style="left:967px;top:47px;width:1px;height:599px;background:#ececec"></div>
<div class="a" style="left:1051px;top:47px;width:1px;height:599px;background:#ececec"></div>
<div class="a" style="left:1135px;top:47px;width:1px;height:599px;background:#ececec"></div>
<div class="a" style="left:1051.5px;top:140.50px;width:168px;height:17.90px;background:#ffff00"></div>
<div class="t" style="left:848.2px;top:51px;;letter-spacing:-0.211px">Expression</div>
<div class="t" style="left:972px;top:51px;;letter-spacing:-0.12px">Type</div>
<div class="t" style="left:1057px;top:51px;;letter-spacing:-0.125px">Value</div>
<div class="t" style="left:1141px;top:51px;;letter-spacing:-0.117px">Address</div>
<div class="t" style="left:882.5px;top:70.2px;;letter-spacing:-0.12px">rega_8</div>
<div class="t" style="left:971.5px;top:70.2px;;letter-spacing:-0.122px">uint8x16_t</div>
<div class="t" style="left:1056px;top:70.20px;width:78px;overflow:hidden;letter-spacing:0.233px">[16]</div>
<div class="t" style="left:1141px;top:70.2px;;letter-spacing:-0.244px">0x20000000</div>
<svg class="a" style="left:851px;top:73.4px" width="7" height="9" viewBox="0 0 7 9"><path d="M1.5 1 L5.3 4.5 L1.5 8" stroke="#8a8a8a" stroke-width="1.4" fill="none"/></svg>
<svg class="a" style="left:863px;top:69.2px" width="16" height="15" viewBox="0 0 16 15"><defs><linearGradient id="dg" x1="0" y1="0" x2="0" y2="1"><stop offset="0" stop-color="#9ec0e2"/><stop offset="1" stop-color="#2d6aae"/></linearGradient></defs><path d="M1 4.5 Q1 3.3 2.4 3.3 H4.6 L6 5 V14 H2.2 Q1 14 1 12.8 Z" fill="#f8eab8" stroke="#d3a24e" stroke-width="1"/><path d="M5.3 7.2 V5.2 A5 5 0 0 1 15.3 5.2 V7.2 Z" fill="url(#dg)"/><path d="M1.2 14.2 L4.8 8 H15.2 L11.6 14.2 Z" fill="#f5d27a" stroke="#d3a24e" stroke-width="1" stroke-linejoin="round"/></svg>
<div class="t" style="left:882.5px;top:88.6px;;letter-spacing:-0.12px">regb_8</div>
<div class="t" style="left:971.5px;top:88.6px;;letter-spacing:-0.122px">uint8x16_t</div>
<div class="t" style="left:1056px;top:88.60px;width:78px;overflow:hidden;letter-spacing:0.233px">[16]</div>
<div class="t" style="left:1141px;top:88.6px;;letter-spacing:-0.244px">0x20000010</div>
<svg class="a" style="left:851px;top:91.80000000000001px" width="7" height="9" viewBox="0 0 7 9"><path d="M1.5 1 L5.3 4.5 L1.5 8" stroke="#8a8a8a" stroke-width="1.4" fill="none"/></svg>
<svg class="a" style="left:863px;top:87.60000000000001px" width="16" height="15" viewBox="0 0 16 15"><defs><linearGradient id="dg" x1="0" y1="0" x2="0" y2="1"><stop offset="0" stop-color="#9ec0e2"/><stop offset="1" stop-color="#2d6aae"/></linearGradient></defs><path d="M1 4.5 Q1 3.3 2.4 3.3 H4.6 L6 5 V14 H2.2 Q1 14 1 12.8 Z" fill="#f8eab8" stroke="#d3a24e" stroke-width="1"/><path d="M5.3 7.2 V5.2 A5 5 0 0 1 15.3 5.2 V7.2 Z" fill="url(#dg)"/><path d="M1.2 14.2 L4.8 8 H15.2 L11.6 14.2 Z" fill="#f5d27a" stroke="#d3a24e" stroke-width="1" stroke-linejoin="round"/></svg>
<div class="t" style="left:882.5px;top:107.0px;;letter-spacing:-0.12px">regc_8</div>
<div class="t" style="left:971.5px;top:107.0px;;letter-spacing:-0.122px">uint8x16_t</div>
<div class="t" style="left:1056px;top:107.00px;width:78px;overflow:hidden;letter-spacing:0.233px">[16]</div>
<div class="t" style="left:1141px;top:107.0px;;letter-spacing:-0.244px">0x20000020</div>
<svg class="a" style="left:851px;top:110.2px" width="7" height="9" viewBox="0 0 7 9"><path d="M1.5 1 L5.3 4.5 L1.5 8" stroke="#8a8a8a" stroke-width="1.4" fill="none"/></svg>
<svg class="a" style="left:863px;top:106.0px" width="16" height="15" viewBox="0 0 16 15"><defs><linearGradient id="dg" x1="0" y1="0" x2="0" y2="1"><stop offset="0" stop-color="#9ec0e2"/><stop offset="1" stop-color="#2d6aae"/></linearGradient></defs><path d="M1 4.5 Q1 3.3 2.4 3.3 H4.6 L6 5 V14 H2.2 Q1 14 1 12.8 Z" fill="#f8eab8" stroke="#d3a24e" stroke-width="1"/><path d="M5.3 7.2 V5.2 A5 5 0 0 1 15.3 5.2 V7.2 Z" fill="url(#dg)"/><path d="M1.2 14.2 L4.8 8 H15.2 L11.6 14.2 Z" fill="#f5d27a" stroke="#d3a24e" stroke-width="1" stroke-linejoin="round"/></svg>
<div class="t" style="left:882.5px;top:125.4px;;letter-spacing:-0.12px">regd_8</div>
<div class="t" style="left:971.5px;top:125.4px;;letter-spacing:-0.122px">uint8x16_t</div>
<div class="t" style="left:1056px;top:125.40px;width:78px;overflow:hidden;letter-spacing:0.233px">[16]</div>
<div class="t" style="left:1141px;top:125.4px;;letter-spacing:-0.244px">0x20000030</div>
<svg class="a" style="left:851px;top:128.6px" width="7" height="9" viewBox="0 0 7 9"><path d="M1.5 1 L5.3 4.5 L1.5 8" stroke="#8a8a8a" stroke-width="1.4" fill="none"/></svg>
<svg class="a" style="left:863px;top:124.39999999999999px" width="16" height="15" viewBox="0 0 16 15"><defs><linearGradient id="dg" x1="0" y1="0" x2="0" y2="1"><stop offset="0" stop-color="#9ec0e2"/><stop offset="1" stop-color="#2d6aae"/></linearGradient></defs><path d="M1 4.5 Q1 3.3 2.4 3.3 H4.6 L6 5 V14 H2.2 Q1 14 1 12.8 Z" fill="#f8eab8" stroke="#d3a24e" stroke-width="1"/><path d="M5.3 7.2 V5.2 A5 5 0 0 1 15.3 5.2 V7.2 Z" fill="url(#dg)"/><path d="M1.2 14.2 L4.8 8 H15.2 L11.6 14.2 Z" fill="#f5d27a" stroke="#d3a24e" stroke-width="1" stroke-linejoin="round"/></svg>
<div class="t" style="left:882.5px;top:143.8px;;letter-spacing:-0.09px">helium_test</div>
<div class="t" style="left:971.5px;top:143.8px;;letter-spacing:0.3px">void (void)</div>
<div class="t" style="left:1056px;top:143.80px;width:78px;overflow:hidden;letter-spacing:0.037px">{void (void)} ...</div>
<div class="t" style="left:1141px;top:143.8px;;letter-spacing:-0.244px">0x2</div>
<svg class="a" style="left:864.8px;top:145.7px" width="10.5" height="9" viewBox="0 0 10.5 9"><path d="M0.3 2.6 H4.6 V0.3 L10.2 4.5 L4.6 8.7 V6.4 H0.3 Z" fill="#1d3769" stroke="#1d3769" stroke-width="0.6" stroke-linejoin="round"/></svg>
<div class="t" style="left:882.5px;top:162.2px;;letter-spacing:-0.112px">hal_entry</div>
<div class="t" style="left:971.5px;top:162.2px;;letter-spacing:0.3px">void (void)</div>
<div class="t" style="left:1056px;top:162.20px;width:78px;overflow:hidden;letter-spacing:0.037px">{void (void)} ...</div>
<div class="t" style="left:1141px;top:162.2px;;letter-spacing:-0.244px">0x2000040</div>
<svg class="a" style="left:864.8px;top:164.1px" width="10.5" height="9" viewBox="0 0 10.5 9"><path d="M0.3 2.6 H4.6 V0.3 L10.2 4.5 L4.6 8.7 V6.4 H0.3 Z" fill="#1d3769" stroke="#1d3769" stroke-width="0.6" stroke-linejoin="round"/></svg>
<div class="t" style="left:882.5px;top:180.6px;;letter-spacing:-0.12px">i</div>
<div class="t" style="left:971.5px;top:180.6px;;letter-spacing:-0.129px">uint16_t</div>
<div class="t" style="left:1056px;top:180.60px;width:78px;overflow:hidden;letter-spacing:-0.12px">0</div>
<div class="t" style="left:1141px;top:180.6px;;letter-spacing:-0.244px">0x22000040</div>
<svg class="a" style="left:862.8px;top:181.5px" width="17" height="10" viewBox="0 0 17 10"><g fill="none" stroke="#42618a" stroke-width="1.7"><path d="M3.2 0.6 Q0.9 4.5 3.2 8.8"/><path d="M9 0.6 Q11.3 4.5 9 8.8"/><path d="M4.6 2.6 L7.6 6.8 M7.6 2.6 L4.6 6.8"/><path d="M12 3.8 H15 M12 6 H15" stroke-width="1.3"/></g></svg>
<svg class="a" style="left:863px;top:198.7px" width="14" height="13" viewBox="0 0 14 13"><path d="M5 0.5 H9 V4.5 H13.5 V8.5 H9 V12.5 H5 V8.5 H0.5 V4.5 H5 Z" fill="#8ac43f" stroke="#5e9a25" stroke-width="0.8"/></svg>
<div class="t" style="left:882.5px;top:199.00px;width:84px;overflow:hidden;font-style:italic;letter-spacing:-0.55px">Add new expression</div>
<div class="a" style="left:1136px;top:47px;width:79px;height:153px;border:3px solid #e81123"></div>
<div class="a" style="left:3px;top:653px;width:1216px;height:15px;background:#f0f0f0;border-top:1px solid #d6d6d6"></div>
<div class="a" style="left:4px;top:653px;width:90px;height:15px;background:#f7f7f7;border-left:1px solid #c6c6c6;border-right:1px solid #c6c6c6"></div>
<div class="a" style="left:4px;top:653px;width:90px;height:3px;background:#707070;border-radius:2px 2px 0 0"></div>
<svg class="a" style="left:9px;top:657.5px" width="14" height="11" viewBox="0 0 14 11"><rect x="1" y="1" width="12" height="12" rx="2" fill="#e9f0fa" stroke="#5077b8" stroke-width="1.8"/><path d="M3.5 4.5 H8.5 M3.5 7 H10.5" stroke="#6b8fcc" stroke-width="1"/></svg>
<div class="t" style="left:27.5px;top:659px;letter-spacing:-0.12px">Console</div>
<svg class="a" style="left:78px;top:661px" width="9.5" height="9.5" viewBox="0 0 9.5 9.5"><path d="M0.5 0.5 L9.0 9.0 M9.0 0.5 L0.5 9.0" stroke="#4a4a4a" stroke-width="1"/></svg>
<svg class="a" style="left:99.5px;top:657.5px" width="16" height="11" viewBox="0 0 16 11"><g font-family="Liberation Sans" font-weight="bold" font-size="7.6" fill="#6aaedc" letter-spacing="-0.2"><text x="0" y="6.2">1010</text><text x="0" y="13.4">0101</text></g></svg>
<div class="t" style="left:119px;top:659px;letter-spacing:-0.213px">Registers</div>
<div class="a" style="left:170.5px;top:654px;width:1px;height:14px;background:#c6c6c6"></div>
<svg class="a" style="left:175px;top:657px" width="15" height="11" viewBox="0 0 15 11"><path d="M0.7 0.7 H10.5 Q13.8 0.7 13.8 4 V12 H0.7 Z" fill="#e6eff8" stroke="#b9c7d8" stroke-width="1"/><path d="M0.7 0.7 V12" stroke="#c8c08a" stroke-width="1"/><circle cx="5.6" cy="4.4" r="2.7" fill="#e23236"/><circle cx="4.5" cy="11" r="2.6" fill="#e8c27a"/></svg>
<div class="t" style="left:194.8px;top:659px;letter-spacing:0.043px">Problems</div>
<div class="a" style="left:248.5px;top:654px;width:1px;height:14px;background:#c6c6c6"></div>
<svg class="a" style="left:255px;top:657.5px" width="14" height="11" viewBox="0 0 14 11"><rect x="1.3" y="1.3" width="11.5" height="12" rx="2" fill="#dbe8f6" stroke="#4d6eb0" stroke-width="2"/><path d="M3.5 4.5 H6.5" stroke="#7080c0" stroke-width="1"/><circle cx="10" cy="10.5" r="3.2" fill="#4f8a66"/><rect x="6" y="3" width="2" height="3" fill="#6a9a80"/></svg>
<div class="t" style="left:273.1px;top:659px;letter-spacing:-0.02px">Debugger Console</div>
<div class="a" style="left:375.5px;top:654px;width:1px;height:14px;background:#c6c6c6"></div>
<svg class="a" style="left:379.5px;top:656.5px" width="19" height="12" viewBox="0 0 19 12"><circle cx="6.4" cy="6.2" r="5.3" fill="#b5e08a" stroke="#3e9fd0" stroke-width="1.6"/><path d="M4 3 Q6 2.5 7 5 Q8 8 6 10" fill="#d6e8a0"/><circle cx="14.5" cy="9" r="3" fill="#e8d08a" stroke="#c8a868" stroke-width="0.8"/></svg>
<div class="t" style="left:399.3px;top:659px;letter-spacing:-0.075px">Smart Browser</div>
<div class="a" style="left:480.5px;top:654px;width:1px;height:14px;background:#c6c6c6"></div>
<svg class="a" style="left:489px;top:657.5px" width="11" height="11" viewBox="0 0 11 11"><rect x="1.3" y="1.3" width="8" height="13" rx="3" fill="#c8dcf3" stroke="#3f75c8" stroke-width="2"/><path d="M2.5 3.5 H8" stroke="#8aaede" stroke-width="1"/></svg>
<div class="t" style="left:504.1px;top:659px;letter-spacing:0.42px">Memory</div>
<div class="a" style="left:552.5px;top:654px;width:1px;height:14px;background:#c6c6c6"></div>
<svg class="a" style="left:558.3px;top:657.5px" width="15" height="11" viewBox="0 0 15 11"><rect x="0.8" y="0.8" width="13.6" height="13" rx="1" fill="#eef1f6" stroke="#9aa6ba" stroke-width="1.2"/><rect x="0.8" y="0.8" width="13.6" height="2.8" fill="#8798b3"/><path d="M5.2 3.6 V13 M1.5 6 H13.8 M1.5 8.5 H13.8" stroke="#c3cbd8" stroke-width="0.8"/></svg>
<div class="t" style="left:577px;top:659px;letter-spacing:0.044px">Properties</div>
<div class="a" style="left:634.5px;top:654px;width:1px;height:14px;background:#c6c6c6"></div>
<div class="a" style="left:1117px;top:658px;width:10px;height:10px;background:#b0b0b0;border-radius:1px"></div>
<svg class="a" style="left:1138px;top:657px" width="14" height="11" viewBox="0 0 14 11"><path d="M2 1 L12 11 M12 1 L2 11" stroke="#a9a9a9" stroke-width="3"/></svg>
<svg class="a" style="left:1158px;top:656px" width="16" height="12" viewBox="0 0 16 12"><path d="M2 1 L10 9 M10 1 L2 9" stroke="#c8c8c8" stroke-width="2"/><path d="M6 4 L15 12 M15 4 L6 12" stroke="#a9a9a9" stroke-width="2.5"/></svg>
<div class="a" style="left:1178px;top:655px;width:1px;height:13px;background:#9a9a9a"></div>
<svg class="a" style="left:1186px;top:656px" width="15" height="12" viewBox="0 0 15 12"><path d="M1 0.5 H9 L12 3.5 V13 H1 Z" fill="#fff6d8" stroke="#d3b46a" stroke-width="0.8"/><path d="M3 5 H9 M3 7.5 H9 M3 10 H8" stroke="#3d6fc0" stroke-width="1"/><path d="M9 9 L11 12 L14 8" stroke="#777" stroke-width="1.5" fill="none"/></svg>
<svg class="a" style="left:1207px;top:656px" width="12" height="12" viewBox="0 0 12 12"><rect x="1" y="0.5" width="11" height="13" fill="#e7eef8" stroke="#5a7fb8" stroke-width="0.8"/><rect x="2" y="7" width="7" height="5" fill="#e0b030"/></svg>
</body></html>
